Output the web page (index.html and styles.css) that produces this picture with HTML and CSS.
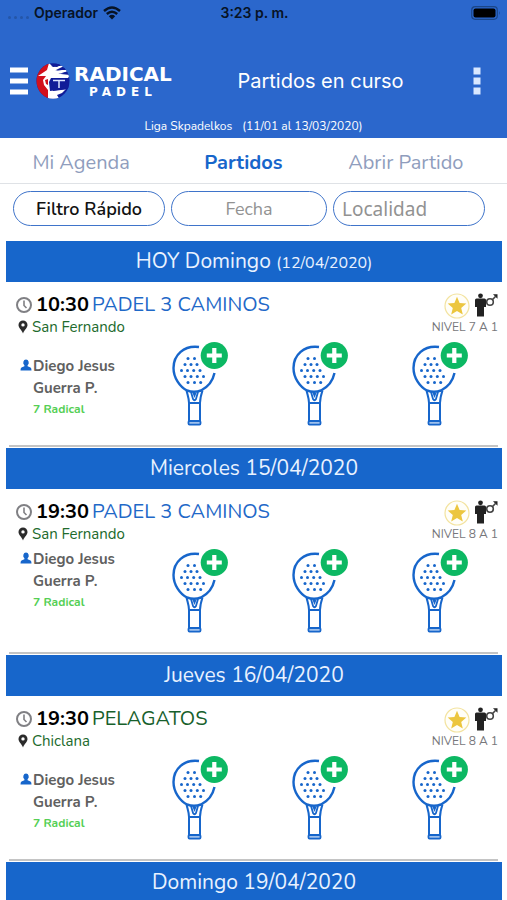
FILE: index.html
```html
<!DOCTYPE html>
<html lang="es">
<head>
<meta charset="utf-8">
<meta name="viewport" content="width=device-width, initial-scale=1">
<title>Radical Padel</title>
<link rel="stylesheet" href="styles.css">
</head>
<body>
<svg class="sprite" aria-hidden="true">
  <symbol id="racket" viewBox="0 0 58 85">
    <path d="M28 6 C13 4 2.500 14 2.500 27 C2.500 37 9 46 16 49.500 Q23 52 30 49.500 C37 46 42 39 43.500 32" fill="none" stroke="#1766cb" stroke-width="2.400"/>
    <g fill="#1766cb">
      <circle cx="17" cy="17.500" r="1.500"/><circle cx="23.500" cy="17.500" r="1.500"/>
      <circle cx="14" cy="23.500" r="1.500"/><circle cx="20" cy="23.500" r="1.500"/><circle cx="26" cy="23.500" r="1.500"/>
      <circle cx="10.500" cy="29.500" r="1.500"/><circle cx="16.500" cy="29.500" r="1.500"/><circle cx="22.700" cy="29.500" r="1.500"/><circle cx="29" cy="29.500" r="1.500"/>
      <circle cx="14" cy="35.500" r="1.500"/><circle cx="20" cy="35.500" r="1.500"/><circle cx="26.300" cy="35.500" r="1.500"/><circle cx="32.500" cy="35.500" r="1.500"/>
      <circle cx="17" cy="41.500" r="1.500"/><circle cx="23.500" cy="41.500" r="1.500"/><circle cx="29.700" cy="41.500" r="1.500"/>
    </g>
    <path d="M15.500 49.500 C16.500 54 18 57 18 62 V80 H29 V62 C29 57 30 54 31.500 49.500" fill="none" stroke="#1766cb" stroke-width="2"/>
    <path d="M18 62 H29 M20 51 L22 58 Q23.500 60.500 25 58 L27 51" fill="none" stroke="#1766cb" stroke-width="1.800"/>
    <path d="M21.500 52 H25.500 L23.500 57 Z" fill="#1766cb"/>
    <rect x="17.500" y="80" width="12" height="3.600" rx="1" fill="#9fc1ec" stroke="#1766cb" stroke-width="1.800"/>
    <circle cx="43.300" cy="14.500" r="13.600" fill="#0cb863"/>
    <path d="M43.300 7 V22 M35.800 14.500 H50.800" stroke="#fff" stroke-width="4.200"/>
  </symbol>
  <symbol id="clock" viewBox="0 0 18 18">
    <circle cx="9" cy="9" r="7" fill="none" stroke="#808084" stroke-width="2"/>
    <path d="M9 4.500 V9.500 L11.500 12" fill="none" stroke="#808084" stroke-width="1.600"/>
  </symbol>
  <symbol id="pin" viewBox="0 0 10 14">
    <path d="M5 .5 A4.500 4.500 0 0 0 .5 5 C.5 8 3.500 9.500 5 13.500 C6.500 9.500 9.500 8 9.500 5 A4.500 4.500 0 0 0 5 .5 Z M5 3.200 A1.700 1.700 0 1 1 5 6.600 A1.700 1.700 0 1 1 5 3.200 Z" fill="#2b2b2b" fill-rule="evenodd"/>
  </symbol>
  <symbol id="person" viewBox="0 0 12 12">
    <path d="M6 .5 A2.800 3.200 0 0 1 7.600 6.300 V7.200 L10.500 8.400 Q11.500 9 11.500 11.500 H.5 Q.5 9 1.500 8.400 L4.400 7.200 V6.300 A2.800 3.200 0 0 1 6 .5 Z" fill="#1766cb"/>
  </symbol>
  <symbol id="star" viewBox="0 0 26 26">
    <circle cx="13" cy="13" r="12" fill="#fffef8" stroke="#f3e3a0" stroke-width="1.200"/>
    <path d="M13 3.800 L15.600 10 L22.300 10.600 L17.200 15 L18.800 21.600 L13 18 L7.200 21.600 L8.800 15 L3.700 10.600 L10.400 10 Z" fill="#ecc63f"/>
  </symbol>
  <symbol id="man" viewBox="0 0 24 24">
    <g fill="#222">
      <circle cx="6.500" cy="2.800" r="2.400"/>
      <path d="M2.500 5.500 H10.500 Q12 5.500 12 7 V14 H10 V23.500 H3 V14 H1 V7 Q1 5.500 2.500 5.500 Z"/>
      <path d="M19 1.200 H23.500 V5.700 Z"/>
    </g>
    <circle cx="16" cy="9" r="3.300" fill="none" stroke="#444" stroke-width="1.600"/>
    <path d="M18.300 6.700 L22 3" stroke="#444" stroke-width="1.600"/>
  </symbol>
</svg>

<header class="header">
  <div class="status">
    <div class="carrier">
      <span class="signal" aria-hidden="true"><i></i><i></i><i></i><i></i></span>
      <span>Operador</span>
      <svg width="18" height="14" viewBox="0 0 18 14" aria-hidden="true">
        <path d="M1 5 Q9 -2 17 5 M3.800 8 Q9 3.300 14.200 8" fill="none" stroke="#071325" stroke-width="2.400"/>
        <path d="M9 13.500 L5.800 10.200 Q9 7.400 12.200 10.200 Z" fill="#071325"/>
      </svg>
    </div>
    <span>3:23 p. m.</span>
    <svg class="battery" width="30" height="14" viewBox="0 0 30 14" aria-hidden="true">
      <rect x=".7" y=".7" width="25.600" height="12.600" rx="3.500" fill="none" stroke="#1b4688" stroke-width="1.200"/>
      <rect x="2.500" y="2.500" width="22" height="9" rx="2" fill="#000"/>
      <path d="M28 5 Q29.500 7 28 9 Z" fill="#1b4688"/>
    </svg>
  </div>
  <div class="bar">
    <div class="brand">
      <button class="icon-button" type="button" aria-label="Menú">
        <svg width="18" height="28" viewBox="0 0 18 28"><path d="M0 3 H18 M0 14 H18 M0 25 H18" stroke="#fff" stroke-width="5"/></svg>
      </button>
      <svg class="emblem" width="36" height="38" viewBox="0 0 36 38" aria-hidden="true">
        <clipPath id="ball"><ellipse cx="18" cy="19" rx="16.500" ry="17.800"/></clipPath>
        <g clip-path="url(#ball)">
          <path d="M0 0 H36 V38 H0 Z" fill="#101c98"/>
          <path d="M0 0 H14 V38 H0 Z" fill="#d2101c"/>
          <path d="M3 14 L12 8 L14 1 L18 5 L31 3 L21 8 L35 8 L26 12 L35 13 L33 16 L16 16 L14 20 L15 29 L31 27 L27 31 L22 33 L25 38 H13 L13 28 L9 23 L8 18 L11 14 Z" fill="#fff"/>
          <path d="M16 4 L29 0 L22 5 Z M20 9 L31 5 L34 7 Z M23 12 L34 9 V11 Z" fill="#101c98"/>
          <path d="M10 18 L13 17 L13 23 L11 22 Z" fill="#d2101c"/>
          <path d="M16 17 L34 16 V27 L18 29 Z" fill="#101c98"/>
          <path d="M18 18.500 H30 M24 18.500 V26" stroke="#d9e3ff" stroke-width="1.500"/>
        </g>
      </svg>
      <div class="wordmark">
        <span class="wordmark-main">RADICAL</span>
        <span class="wordmark-sub">PADEL</span>
      </div>
    </div>
    <h1 class="title">Partidos en curso</h1>
    <button class="icon-button" type="button" aria-label="Más opciones">
      <svg width="8" height="28" viewBox="0 0 8 28"><path d="M.5 .5 H7.500 V7.500 H.5 Z M.5 10.500 H7.500 V17.500 H.5 Z M.5 20.500 H7.500 V27.500 H.5 Z" fill="#d9e8ff"/></svg>
    </button>
  </div>
  <p class="league"><span>Liga Skpadelkos</span><span>(11/01 al 13/03/2020)</span></p>
</header>

<nav class="tabs">
  <a href="#agenda">Mi Agenda</a>
  <a class="active" href="#partidos" aria-current="page">Partidos</a>
  <a href="#abrir">Abrir Partido</a>
</nav>

<form class="filters">
  <button class="pill" type="button">Filtro Rápido</button>
  <input class="pill" type="text" placeholder="Fecha" aria-label="Fecha">
  <input class="pill pill-town" type="text" placeholder="Localidad" aria-label="Localidad">
</form>

<main class="matches" id="partidos">
  <section class="day">
    <h2 class="banner">HOY Domingo <small>(12/04/2020)</small></h2>
    <article class="match">
      <div class="summary">
        <div>
          <h3 class="club"><svg class="clock"><use href="#clock"/></svg><time>10:30</time><a href="#club">PADEL 3 CAMINOS</a></h3>
          <p class="place"><svg class="pin"><use href="#pin"/></svg>San Fernando</p>
        </div>
        <div class="level">
          <div class="badges"><svg class="star"><use href="#star"/></svg><svg class="man"><use href="#man"/></svg></div>
          <p>NIVEL 7 A 1</p>
        </div>
      </div>
      <div class="players">
        <div class="player player-low"><svg class="person"><use href="#person"/></svg><div><p class="name">Diego Jesus Guerra P.</p><p class="rank">7 Radical</p></div></div>
        <button class="join" type="button" aria-label="Unirse"><svg><use href="#racket"/></svg></button>
        <button class="join" type="button" aria-label="Unirse"><svg><use href="#racket"/></svg></button>
        <button class="join" type="button" aria-label="Unirse"><svg><use href="#racket"/></svg></button>
      </div>
    </article>
  </section>
  <section class="day">
    <h2 class="banner">Miercoles 15/04/2020</h2>
    <article class="match">
      <div class="summary">
        <div>
          <h3 class="club"><svg class="clock"><use href="#clock"/></svg><time>19:30</time><a href="#club">PADEL 3 CAMINOS</a></h3>
          <p class="place"><svg class="pin"><use href="#pin"/></svg>San Fernando</p>
        </div>
        <div class="level">
          <div class="badges"><svg class="star"><use href="#star"/></svg><svg class="man"><use href="#man"/></svg></div>
          <p>NIVEL 8 A 1</p>
        </div>
      </div>
      <div class="players">
        <div class="player"><svg class="person"><use href="#person"/></svg><div><p class="name">Diego Jesus Guerra P.</p><p class="rank">7 Radical</p></div></div>
        <button class="join" type="button" aria-label="Unirse"><svg><use href="#racket"/></svg></button>
        <button class="join" type="button" aria-label="Unirse"><svg><use href="#racket"/></svg></button>
        <button class="join" type="button" aria-label="Unirse"><svg><use href="#racket"/></svg></button>
      </div>
    </article>
  </section>
  <section class="day">
    <h2 class="banner">Jueves 16/04/2020</h2>
    <article class="match">
      <div class="summary">
        <div>
          <h3 class="club"><svg class="clock"><use href="#clock"/></svg><time>19:30</time><a class="green" href="#club">PELAGATOS</a></h3>
          <p class="place"><svg class="pin"><use href="#pin"/></svg>Chiclana</p>
        </div>
        <div class="level">
          <div class="badges"><svg class="star"><use href="#star"/></svg><svg class="man"><use href="#man"/></svg></div>
          <p>NIVEL 8 A 1</p>
        </div>
      </div>
      <div class="players">
        <div class="player player-low"><svg class="person"><use href="#person"/></svg><div><p class="name">Diego Jesus Guerra P.</p><p class="rank">7 Radical</p></div></div>
        <button class="join" type="button" aria-label="Unirse"><svg><use href="#racket"/></svg></button>
        <button class="join" type="button" aria-label="Unirse"><svg><use href="#racket"/></svg></button>
        <button class="join" type="button" aria-label="Unirse"><svg><use href="#racket"/></svg></button>
      </div>
    </article>
  </section>
  <section class="day">
    <h2 class="banner">Domingo 19/04/2020</h2>
  </section>
</main>
</body>
</html>
```
FILE: styles.css
```css
* { box-sizing: border-box; }

html, body { height: 100%; }

body {
  margin: 0;
  display: flex;
  flex-direction: column;
  overflow: hidden;
  background: #fff;
  font-family: Nunito, Lato, "Noto Sans", sans-serif;
  color: #000;
}

h1, h2, h3, p { margin: 0; font-weight: 400; }
a { color: inherit; text-decoration: none; }
button, input { font: inherit; }
svg { display: block; flex: none; }
.sprite { position: absolute; width: 0; height: 0; }

/* Header */
.header {
  flex: none;
  background: #2b67cc;
  color: #fff;
}

.status {
  display: grid;
  grid-template-columns: 1fr auto 1fr;
  align-items: center;
  height: 26px;
  padding: 0 6px 0 8px;
  font: 600 14px/26px Inter, sans-serif;
  color: #071325;
}

.carrier { display: flex; align-items: center; gap: 5px; }
.signal { display: flex; gap: 3px; padding-top: 8px; }
.signal i { width: 3px; height: 3px; border-radius: 50%; background: #2456a8; }
.battery { justify-self: end; }

.bar {
  display: grid;
  grid-template-columns: 164px 1fr auto;
  align-items: center;
  height: 66px;
  margin: 22px 0 5px;
  padding: 0 26px 0 10px;
}

.brand { display: flex; align-items: center; }
.icon-button { padding: 0; border: 0; background: none; }
.emblem { margin-left: 7px; }
.wordmark { display: flex; flex-direction: column; align-items: center; margin-left: 3px; }
.wordmark-main { font: 700 20px/22px "DejaVu Sans", sans-serif; }
.wordmark-sub { font: 700 12px/14px "DejaVu Sans", sans-serif; letter-spacing: 5px; }
.title { font: 400 20px/24px Inter, sans-serif; text-align: center; padding-right: 6px; }

.league {
  display: flex;
  justify-content: center;
  gap: 10px;
  height: 19px;
  font-size: 12px;
  line-height: 14px;
}

/* Tabs */
.tabs {
  flex: none;
  display: grid;
  grid-template-columns: repeat(3, 1fr);
  height: 46px;
  padding-right: 20px;
  border-bottom: 1px solid #dfe2e6;
  font-size: 20px;
  line-height: 50px;
  text-align: center;
  color: #8f9dbd;
}

.tabs .active { font-weight: 700; color: #1766cb; }

/* Filters */
.filters {
  flex: none;
  display: grid;
  grid-template-columns: 152fr 156fr 152fr;
  gap: 6px;
  padding: 7px 22px 15px 13px;
}

.pill {
  width: 100%;
  min-width: 0;
  height: 35px;
  padding: 0 8px;
  border: 1px solid #3f74ca;
  border-radius: 18px;
  background: #fff;
  font-size: 18px;
  line-height: 24px;
  color: #111;
  text-align: center;
}

button.pill { font-weight: 600; }
.pill::placeholder { color: #929292; opacity: 1; }
.pill-town { font-family: "Noto Sans", sans-serif; font-size: 19px; text-align: left; }

/* Match list */
.matches { padding: 0 5px 0 6px; }

.banner {
  height: 41px;
  background: #1766cb;
  color: #e9f2ff;
  font-size: 21px;
  line-height: 41px;
  text-align: center;
}

.banner small { font-size: 16px; }

.match {
  margin: 0 4px 1px 3px;
  padding: 11px 0 19px;
  border-bottom: 2px solid #c4c4c4;
}

.summary {
  display: flex;
  justify-content: space-between;
  height: 48px;
  padding-left: 6px;
}

.club {
  display: flex;
  align-items: center;
  gap: 3px;
  font-size: 20px;
  line-height: 24px;
  color: #1f69c8;
}

.club time { font-weight: 700; color: #000; }
.club .green { color: #17602b; }
.clock { width: 18px; height: 18px; }

.place {
  display: flex;
  align-items: center;
  gap: 4px;
  padding-left: 3px;
  font-size: 15px;
  line-height: 20px;
  color: #216a2c;
}

.pin { width: 10px; height: 14px; }

.level { color: #77777b; font-size: 12px; line-height: 18px; text-align: right; }
.badges { display: flex; justify-content: flex-end; gap: 4px; height: 25px; }
.star { width: 26px; height: 26px; }
.man { width: 24px; height: 24px; }

.players {
  display: grid;
  grid-template-columns: repeat(4, 1fr);
  margin-right: -2px;
  padding-left: 11px;
}

.player { display: flex; align-items: flex-start; gap: 1px; }
.player-low { padding-top: 14px; }
.person { width: 12px; height: 12px; margin-top: 4px; }
.name { max-width: 90px; font-size: 15px; font-weight: 700; line-height: 22px; color: #606060; }
.rank { font-size: 12px; font-weight: 700; line-height: 20px; color: #55cf55; }

.join {
  display: flex;
  justify-content: center;
  padding: 0;
  border: 0;
  background: none;
}

.join svg { width: 58px; height: 85px; }
```
